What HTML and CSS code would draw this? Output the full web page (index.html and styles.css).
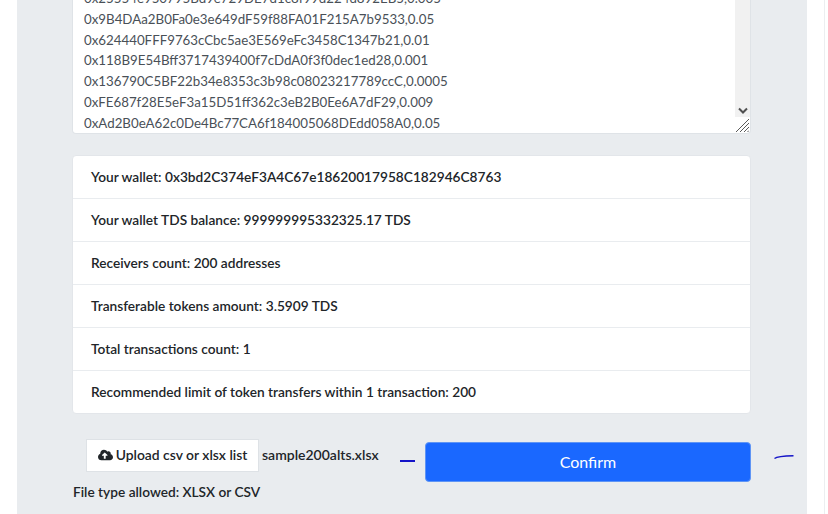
FILE: index.html
```html
<!DOCTYPE html>
<html lang="en">
<head>
<meta charset="utf-8">
<title>Multisender</title>
<link rel="stylesheet" href="styles.css">
</head>
<body>
<main class="panel">
  <section class="textbox">
    <div class="lines">
      <div>0x25554e950795Bd9e729DE7d1c8f99d224d892EB5,0.005</div>
      <div>0x9B4DAa2B0Fa0e3e649dF59f88FA01F215A7b9533,0.05</div>
      <div>0x624440FFF9763cCbc5ae3E569eFc3458C1347b21,0.01</div>
      <div>0x118B9E54Bff3717439400f7cDdA0f3f0dec1ed28,0.001</div>
      <div>0x136790C5BF22b34e8353c3b98c08023217789ccC,0.0005</div>
      <div>0xFE687f28E5eF3a15D51ff362c3eB2B0Ee6A7dF29,0.009</div>
      <div>0xAd2B0eA62c0De4Bc77CA6f184005068DEdd058A0,0.05</div>
    </div>
    <div class="scrollbar">
      <svg class="chevron" width="10" height="7" viewBox="0 0 10 7"><path d="M1 1.5 5 5.5 9 1.5" fill="none" stroke="#505050" stroke-width="2"/></svg>
    </div>
    <svg class="grip" width="14" height="14" viewBox="0 0 14 14"><path d="M1 14 14 1M5 14 14 5M9 14 14 9M12.5 14 14 12.5" stroke="#5a5a5a" stroke-width="1" fill="none"/></svg>
  </section>
  <ul class="info">
    <li>Your wallet: 0x3bd2C374eF3A4C67e18620017958C182946C8763</li>
    <li>Your wallet TDS balance: 999999995332325.17 TDS</li>
    <li>Receivers count: 200 addresses</li>
    <li>Transferable tokens amount: 3.5909 TDS</li>
    <li>Total transactions count: 1</li>
    <li>Recommended limit of token transfers within 1 transaction: 200</li>
  </ul>
  <div class="actions">
    <div class="upload-area">
      <div class="upload-row">
        <button class="upload">
          <svg class="cloud" width="15" height="12" viewBox="0 0 640 512"><path fill="#212529" d="M537.6 226.6c4.1-10.7 6.4-22.4 6.4-34.6 0-53-43-96-96-96-19.7 0-38.1 6-53.3 16.2C367 64.2 315.3 32 256 32c-88.4 0-160 71.6-160 160 0 2.7.1 5.4.2 8.1C40.2 219.8 0 273.2 0 336c0 79.5 64.5 144 144 144h368c70.7 0 128-57.3 128-128 0-61.9-44-113.6-102.4-125.4zM393.4 288H328v112c0 8.8-7.2 16-16 16h-48c-8.8 0-16-7.2-16-16V288h-65.4c-14.3 0-21.4-17.2-11.3-27.3l105.4-105.4c6.2-6.2 16.4-6.2 22.6 0l105.4 105.4c10.1 10.1 2.9 27.3-11.3 27.3z"/></svg>
          Upload csv or xlsx list
        </button>
        <span class="filename">sample200alts.xlsx</span>
      </div>
      <p class="hint">File type allowed: XLSX or CSV</p>
    </div>
    <i class="mark mark-left"></i>
    <button class="confirm">Confirm</button>
    <svg class="mark-right" width="20" height="6" viewBox="0 0 20 6"><path d="M0.5 4.5C3 2.5 10 2 19.5 1.8" fill="none" stroke="#1414c8" stroke-width="1.4"/></svg>
  </div>
</main>
<div class="edge"></div>
</body>
</html>
```
FILE: styles.css
```css
html, body {
  margin: 0;
  height: 514px;
  overflow: hidden;
  background: #fff;
}
body {
  display: flex;
  font-family: "Lato", "Open Sans", sans-serif;
  color: #212529;
}
.panel {
  box-sizing: border-box;
  width: 790px;
  height: 514px;
  margin-left: 17px;
  padding: 0 56px 0 55px;
  background: #e9ecef;
  flex: none;
}
.edge {
  width: 1px;
  height: 514px;
  margin-left: 17px;
  background: #eceef0;
}
.textbox {
  position: relative;
  height: 134px;
  box-sizing: border-box;
  overflow: hidden;
  background: #fff;
  border-radius: 0 0 4px 4px;
  border: 1px solid #dfe3e7;
  border-top: 0;
}
.lines {
  margin-top: -12px;
  padding-left: 11px;
  font-size: 13.3px;
  line-height: 20.8px;
  color: #495057;
  white-space: nowrap;
}
.scrollbar {
  position: absolute;
  top: 0;
  right: 0;
  width: 15px;
  height: 117px;
  background: #f1f1f1;
  display: flex;
  align-items: flex-end;
  justify-content: center;
}
.chevron { margin-bottom: 3px; }
.grip {
  position: absolute;
  right: 1px;
  bottom: 1px;
}
.info {
  list-style: none;
  margin: 21px 0 0;
  padding: 0;
  background: #fff;
  border-radius: 4px;
  border: 1px solid #e3e6ea;
}
.info li {
  box-sizing: border-box;
  height: 43px;
  padding: 0 18px 2px;
  display: flex;
  align-items: center;
  font-size: 13.7px;
  font-weight: 600;
  color: #212529;
  border-bottom: 1px solid #e9ecef;
}
.info li:last-child { border-bottom: 0; height: 42px; }
.actions {
  display: flex;
  align-items: flex-start;
  margin-top: 25px;
}
.upload-area { width: 327px; flex: none; }
.upload-row {
  display: flex;
  align-items: center;
  gap: 3px;
}
.upload {
  box-sizing: border-box;
  width: 173px;
  height: 33px;
  margin-left: 14px;
  padding: 0 0 2px;
  border: 1px solid #dee2e6;
  background: #fff;
  font: 600 13.9px "Lato", "Open Sans", sans-serif;
  color: #212529;
  display: flex;
  align-items: center;
  justify-content: center;
  gap: 3px;
}
.filename {
  padding-bottom: 2px;
  font-size: 14px;
  font-weight: 600;
}
.hint {
  margin: 11px 0 0 1px;
  font-size: 13.7px;
  font-weight: 600;
  line-height: 18px;
}
.mark {
  display: block;
  flex: none;
  width: 15px;
  height: 2px;
  margin: 21px 0 0 1px;
  background: #1414c8;
}
.confirm {
  box-sizing: border-box;
  flex: none;
  width: 326px;
  height: 40px;
  margin: 3px 0 0 10px;
  padding: 0 0 2px;
  border: 1px solid #5f95f5;
  border-radius: 4px;
  background: #1a68ff;
  color: #fff;
  font: 400 16px "Lato", "Open Sans", sans-serif;
}
.mark-right {
  flex: none;
  margin: 15px 0 0 23px;
}
```
